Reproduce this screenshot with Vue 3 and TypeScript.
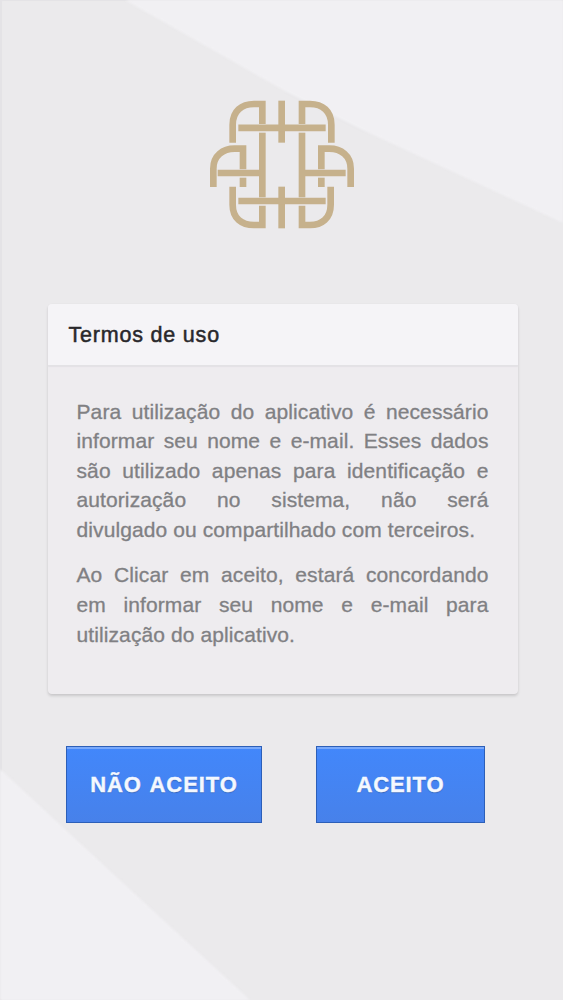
<script setup lang="ts">
import { ref } from 'vue'

const title = 'Termos de uso'

// The no-break space keeps "divulgado ou" together on the last line
const paragraphs: string[] = [
  'Para utilização do aplicativo é necessário informar seu nome e e-mail. Esses dados são utilizado apenas para identificação e autorização no sistema, não será divulgado\u00a0ou compartilhado com terceiros.',
  'Ao Clicar em aceito, estará concordando em informar seu nome e e-mail para utilização do aplicativo.',
]

const accepted = ref<boolean | null>(null)

// Each entry is one strand of the woven emblem
const strands: string[] = [
  // top loops
  'M98 158V104C98 63 125 42 162 42H187V102',
  'M394 158V104C394 63 367 42 330 42H306V102',
  'M245 32V158',
  'M115 113.500H377',
  // uprights
  'M187 128V322',
  'M306 128V322',
  // side loops
  'M40 291V236C40 197 69 176 104 176H129V238',
  'M452 291V236C452 197 423 176 388 176H364V238',
  'M129 263V291',
  'M364 263V291',
  'M53 249H182',
  'M312 249H437',
  // bottom loops
  'M98 290V344C98 385 125 405 162 405H187V347',
  'M392 290V344C392 385 365 405 330 405H306V347',
  'M245 290V415',
  'M115 333H377',
]
</script>

<template>
  <main class="screen">
    <svg class="backdrop" viewBox="0 0 563 1000" preserveAspectRatio="none">
      <path d="M125 0L285 91L365 131L563 223V0Z" />
      <path d="M0 769L110 871L250 1000H0Z" />
    </svg>

    <svg class="logo" viewBox="0 0 495 450">
      <path v-for="(d, i) in strands" :key="i" :d="d" />
    </svg>

    <section class="card">
      <h1 class="card-title">{{ title }}</h1>
      <div class="card-body">
        <p v-for="(text, i) in paragraphs" :key="i">{{ text }}</p>
      </div>
    </section>

    <div class="actions">
      <button class="btn btn-decline" type="button" @click="accepted = false">NÃO ACEITO</button>
      <button class="btn btn-accept" type="button" @click="accepted = true">ACEITO</button>
    </div>
  </main>
</template>

<style>
body {
  margin: 0;
}
</style>

<style scoped>
.screen {
  position: relative;
  box-sizing: border-box;
  display: flex;
  flex-direction: column;
  align-items: center;
  width: 563px;
  height: 1000px;
  padding-top: 90px;
  overflow: hidden;
  background: #ebeaec;
  box-shadow: inset 2px 1px 1px #e4e3e6;
  font-family: 'Liberation Sans', Arial, sans-serif;
}

.backdrop {
  position: absolute;
  inset: 0;
  width: 100%;
  height: 100%;
  fill: #f1f0f3;
  filter: blur(1px);
}

.logo {
  position: relative;
  width: 165px;
  height: 150px;
  margin-left: 2px;
  fill: none;
  stroke: #c6b18c;
  stroke-width: 20;
}

.card {
  position: relative;
  box-sizing: border-box;
  width: 470px;
  height: 390px;
  margin: 64px 0 0 2px;
  border-radius: 4px;
  background: #eeecef;
  box-shadow: 0 2px 3px rgba(0, 0, 0, 0.14), 0 0 2px rgba(0, 0, 0, 0.03);
}

.card-title {
  box-sizing: border-box;
  height: 61px;
  margin: 0;
  padding: 0 21px;
  border-radius: 4px 4px 0 0;
  background: #f5f4f7;
  box-shadow: 0 2px 1px #e3e2e5;
  color: #29282b;
  font-size: 21.5px;
  font-weight: 400;
  line-height: 63px;
  letter-spacing: 0.8px;
  -webkit-text-stroke: 0.5px #29282b;
}

.card-body {
  padding: 31.5px 29px 0;
  color: #808083;
  font-size: 21px;
  line-height: 29.6px;
  text-align: justify;
  letter-spacing: 0.1px;
  -webkit-text-stroke: 0.3px #808083;
}

.card-body p {
  margin: 0 0 16px;
}

.actions {
  position: relative;
  display: flex;
  gap: 54px;
  align-self: flex-start;
  margin: 52px 0 0 66px;
}

.btn {
  height: 77px;
  padding: 0;
  border: 1px solid #2c5fb8;
  border-radius: 0;
  background: linear-gradient(#4287fb, #4781ea);
  box-shadow: inset 0 2px 0 #79a9fb;
  color: #f4f8ff;
  font-family: inherit;
  font-size: 22px;
  font-weight: 700;
  letter-spacing: 0.9px;
  word-spacing: 1.5px;
  text-shadow: 0 1px 1px rgba(0, 0, 0, 0.25);
  -webkit-text-stroke: 0.4px #f4f8ff;
  cursor: pointer;
}

.btn-decline {
  width: 196px;
}

.btn-accept {
  width: 169px;
}
</style>
